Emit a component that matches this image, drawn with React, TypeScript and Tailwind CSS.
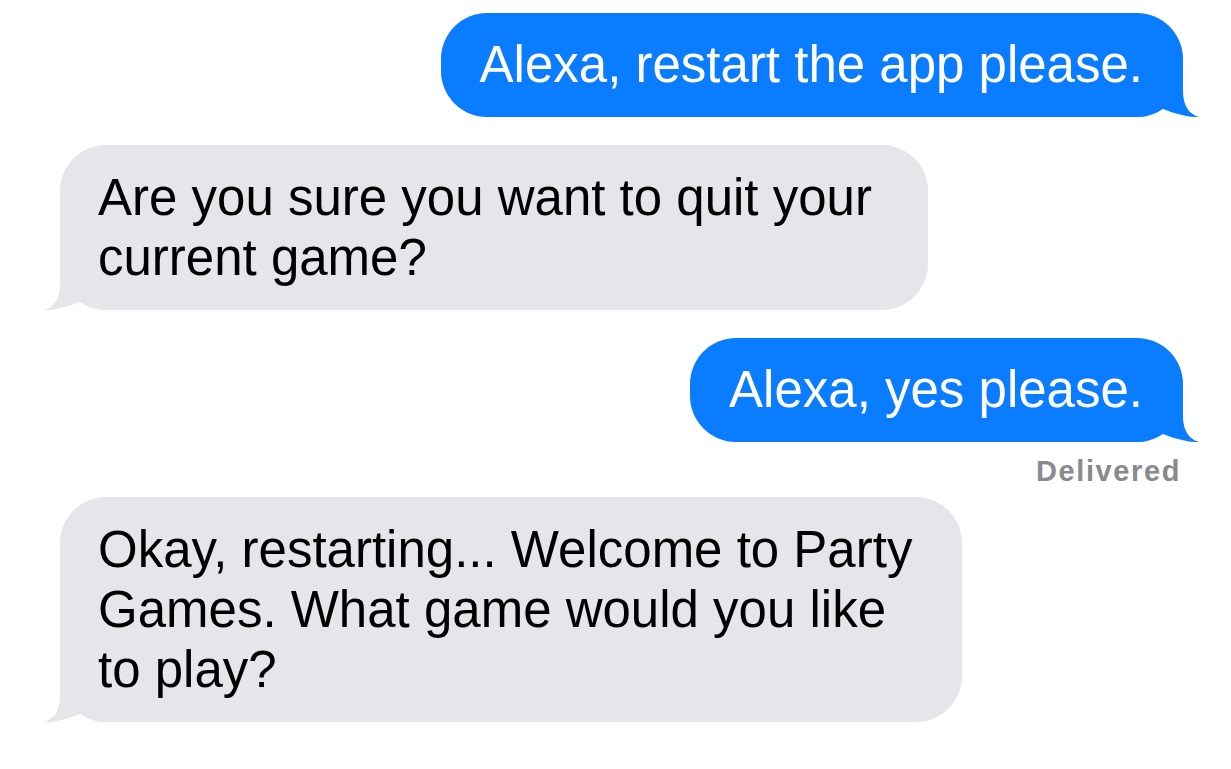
import React from "react";

const Tail = ({ color, side }: { color: string; side: "right" | "left" }) => (
  <svg
    width="60"
    height="56"
    viewBox="0 0 60 56"
    className={
      side === "right"
        ? "absolute bottom-0 right-[-16px]"
        : "absolute bottom-0 left-[-16px] -scale-x-100"
    }
  >
    <path
      d="M44 0 L44 30 C44 45 50 53 60 56 C49 56.5 32 52 20 46 C14 52 8 56 0 56 L0 0 Z"
      fill={color}
    />
  </svg>
);

export default function App() {
  return (
    <div
      className="w-[1231px] h-[769px] bg-white flex flex-col pt-[13px] pl-[60px] pr-[48px] overflow-hidden"
      style={{ fontFamily: '"Liberation Sans", Arial, sans-serif' }}
    >
      <div className="relative self-end bg-[#0a7cff] text-white rounded-[46px] pl-[39px] pr-[40px] pt-[22px] pb-[22px] text-[51px] leading-[60px]">
        <span className="relative z-10">Alexa, restart the app please.</span>
        <Tail color="#0a7cff" side="right" />
      </div>

      <div className="relative self-start mt-[28px] w-[868px] bg-[#e5e5ea] text-black rounded-[46px] pl-[38px] pt-[23px] pb-[22px] text-[51px] leading-[60px]">
        <span className="relative z-10">
          Are you sure you want to quit your
          <br />
          current game?
        </span>
        <Tail color="#e5e5ea" side="left" />
      </div>

      <div className="relative self-end mt-[28px] bg-[#0a7cff] text-white rounded-[46px] pl-[39px] pr-[40px] pt-[22px] pb-[22px] text-[51px] leading-[60px]">
        <span className="relative z-10">Alexa, yes please.</span>
        <Tail color="#0a7cff" side="right" />
      </div>

      <div className="self-end mt-[14px] mr-[2px] text-[29px] leading-[30px] font-bold tracking-[1.6px] text-[#8a8a8e]">
        Delivered
      </div>

      <div className="relative self-start mt-[11px] w-[902px] bg-[#e5e5ea] text-black rounded-[46px] pl-[38px] pt-[23px] pb-[22px] text-[51px] leading-[60px]">
        <span className="relative z-10">
          Okay, restarting... Welcome to Party
          <br />
          Games. What game would you like
          <br />
          to play?
        </span>
        <Tail color="#e5e5ea" side="left" />
      </div>
    </div>
  );
}
